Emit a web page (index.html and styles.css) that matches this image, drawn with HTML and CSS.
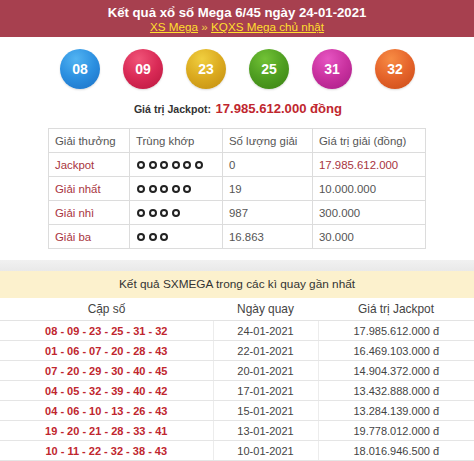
FILE: index.html
```html
<!DOCTYPE html>
<html lang="vi">
<head>
<meta charset="utf-8">
<link rel="stylesheet" href="styles.css">
</head>
<body>
<div class="head">
  <h1 class="title">Kết quả xổ số Mega 6/45 ngày 24-01-2021</h1>
  <div class="crumbs"><a href="#">XS Mega</a> » <a href="#">KQXS Mega chủ nhật</a></div>
</div>
<div class="balls">
  <span class="ball b-blue">08</span>
  <span class="ball b-red">09</span>
  <span class="ball b-gold">23</span>
  <span class="ball b-green">25</span>
  <span class="ball b-pink">31</span>
  <span class="ball b-orange">32</span>
</div>
<div class="jackpot"><span class="jlabel">Giá trị Jackpot:</span> <span class="jval">17.985.612.000 đồng</span></div>
<table class="prizes">
  <colgroup><col class="c1"><col class="c2"><col class="c3"><col class="c4"></colgroup>
  <tr><td>Giải thưởng</td><td>Trùng khớp</td><td>Số lượng giải</td><td>Giá trị giải (đồng)</td></tr>
  <tr><td class="lbl">Jackpot</td><td><span class="dots"><i></i><i></i><i></i><i></i><i></i><i></i></span></td><td>0</td><td class="lbl">17.985.612.000</td></tr>
  <tr><td class="lbl">Giải nhất</td><td><span class="dots"><i></i><i></i><i></i><i></i><i></i></span></td><td>19</td><td>10.000.000</td></tr>
  <tr><td class="lbl">Giải nhì</td><td><span class="dots"><i></i><i></i><i></i><i></i></span></td><td>987</td><td>300.000</td></tr>
  <tr><td class="lbl">Giải ba</td><td><span class="dots"><i></i><i></i><i></i></span></td><td>16.863</td><td>30.000</td></tr>
</table>
<div class="recent">
  <div class="strip"></div>
  <div class="rtitle">Kết quả SXMEGA trong các kì quay gần nhất</div>
  <table class="history">
    <colgroup><col class="h1"><col class="h2"><col class="h3"></colgroup>
    <tr class="hhead"><th>Cặp số</th><th>Ngày quay</th><th>Giá trị Jackpot</th></tr>
    <tr><td class="nums">08 - 09 - 23 - 25 - 31 - 32</td><td>24-01-2021</td><td>17.985.612.000 đ</td></tr>
    <tr><td class="nums">01 - 06 - 07 - 20 - 28 - 43</td><td>22-01-2021</td><td>16.469.103.000 đ</td></tr>
    <tr><td class="nums">07 - 20 - 29 - 30 - 40 - 45</td><td>20-01-2021</td><td>14.904.372.000 đ</td></tr>
    <tr><td class="nums">04 - 05 - 32 - 39 - 40 - 42</td><td>17-01-2021</td><td>13.432.888.000 đ</td></tr>
    <tr><td class="nums">04 - 06 - 10 - 13 - 26 - 43</td><td>15-01-2021</td><td>13.284.139.000 đ</td></tr>
    <tr><td class="nums">19 - 20 - 21 - 28 - 33 - 41</td><td>13-01-2021</td><td>19.778.012.000 đ</td></tr>
    <tr><td class="nums">10 - 11 - 22 - 32 - 38 - 43</td><td>10-01-2021</td><td>18.016.946.500 đ</td></tr>
  </table>
</div>
</body>
</html>
```
FILE: styles.css
```css
html, body { margin: 0; padding: 0; background: #fff; }
body { font-family: "Liberation Sans", Arial, sans-serif; color: #444; }

.head {
  background: #a7404f;
  height: 37px;
  box-sizing: border-box;
  padding-top: 5px;
  text-align: center;
}
.title {
  margin: 0;
  font-size: 13.2px;
  line-height: 15px;
  font-weight: bold;
  color: #fff;
}
.crumbs {
  font-size: 11.7px;
  line-height: 14px;
  color: #f2d24a;
}
.crumbs a { color: #ffdf2e; text-decoration: underline; }

.balls {
  display: flex;
  justify-content: center;
  gap: 23px;
  margin-top: 12px;
  height: 40px;
  padding-left: 1px;
}
.ball {
  width: 40px;
  height: 40px;
  border-radius: 50%;
  display: flex;
  align-items: center;
  justify-content: center;
  color: #fff;
  font-weight: bold;
  font-size: 14px;
  box-shadow: 0 1px 2px rgba(0,0,0,0.15);
}
.b-blue   { background: radial-gradient(circle at 40% 25%, #52b4f2 0%, #2b8fe0 50%, #1c6fc4 100%); }
.b-red    { background: radial-gradient(circle at 40% 25%, #f05478 0%, #d92a56 50%, #b8163d 100%); }
.b-gold   { background: radial-gradient(circle at 40% 25%, #f0cf40 0%, #dbaa1f 50%, #c08c10 100%); }
.b-green  { background: radial-gradient(circle at 40% 25%, #72c236 0%, #4f9e21 50%, #3a8012 100%); }
.b-pink   { background: radial-gradient(circle at 40% 25%, #e655c2 0%, #c9319f 50%, #a61c85 100%); }
.b-orange { background: radial-gradient(circle at 40% 25%, #f78c44 0%, #e5642b 50%, #c94a16 100%); }

.jackpot {
  text-align: center;
  margin-top: 10px;
  height: 18px;
  line-height: 18px;
  padding-left: 2px;
}
.jlabel { font-size: 10.6px; font-weight: bold; color: #333; }
.jval { font-size: 13.1px; font-weight: bold; color: #c0262e; }

.prizes {
  margin: 11px auto 0;
  width: 377px;
  border-collapse: collapse;
  table-layout: fixed;
  font-size: 11.4px;
  color: #555;
}
.prizes .c1 { width: 81px; }
.prizes .c2 { width: 93px; }
.prizes .c3 { width: 90px; }
.prizes .c4 { width: 113px; }
.prizes td {
  border: 1px solid #dcdcdc;
  height: 23px;
  padding: 0 0 0 6px;
  white-space: nowrap;
}
.prizes td.lbl { color: #a83440; }
.dots { display: inline-flex; gap: 3.6px; vertical-align: middle; margin-left: 1px; }
.dots i {
  display: block;
  width: 8px;
  height: 8px;
  box-sizing: border-box;
  border: 2px solid #222;
  border-radius: 50%;
}

.recent { margin-top: 11px; }
.strip { height: 11px; background: linear-gradient(#f1f1f1, #e9e9e9); }
.rtitle {
  background: #fcf1cd;
  height: 27px;
  line-height: 27px;
  text-align: center;
  font-size: 11.8px;
  color: #333;
}
.history {
  width: 100%;
  border-collapse: collapse;
  table-layout: fixed;
  font-size: 11px;
  color: #444;
}
.history .h1 { width: 213px; }
.history .h2 { width: 105px; }
.history .h3 { width: 156px; }
.history th {
  font-weight: normal;
  font-size: 11.9px;
  color: #444;
  height: 22px;
  padding: 0;
  border-bottom: 1px solid #e3e3e3;
}
.history td {
  text-align: center;
  height: 19px;
  padding: 0;
  border-bottom: 1px solid #e5e5e5;
  border-left: 1px solid #ececec;
}
.history td:first-child { border-left: none; }
.history td.nums { color: #c0262e; font-weight: bold; }
```
